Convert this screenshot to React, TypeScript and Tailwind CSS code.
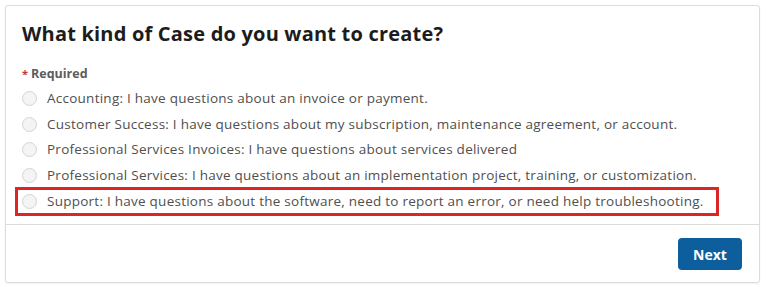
import React, { useState } from 'react'

// ─── Case type options ─────────────────────────────────────────────────────

const CASE_TYPES = [
  'Accounting: I have questions about an invoice or payment.',
  'Customer Success: I have questions about my subscription, maintenance agreement, or account.',
  'Professional Services Invoices: I have questions about services delivered',
  'Professional Services: I have questions about an implementation project, training, or customization.',
  'Support: I have questions about the software, need to report an error, or need help troubleshooting.',
]

const FONT = { fontFamily: '"Open Sans", "Liberation Sans", sans-serif' }

/**
 * Single radio row. Highlighted rows get the red callout box.
 */
function RadioRow({
  label,
  checked,
  onSelect,
}: {
  label: string
  checked: boolean
  onSelect: () => void
}) {
  return (
    <label className="flex items-center gap-[10px] h-[25.5px] cursor-pointer">
      <span
        className={`w-[15px] h-[15px] rounded-full border shrink-0 bg-[#f4f4f4]
                    ${checked ? 'border-[#0c5e9c] border-[4px] bg-white' : 'border-[#d4d4d4]'}`}
      />
      <input type="radio" className="hidden" checked={checked} onChange={onSelect} />
      <span className="text-[13.5px] text-[#4f4f4f] whitespace-nowrap tracking-[0.25px]">{label}</span>
    </label>
  )
}

export default function App() {
  const [selected, setSelected] = useState<number | null>(null)

  return (
    <div className="w-[766px] h-[287px] bg-white p-[5px] pr-[6px] pb-[4px]" style={FONT}>
      <div className="h-full flex flex-col border border-[#dcdcdc] rounded-[3px] shadow-[0_1px_2px_rgba(0,0,0,0.06)]">
        {/* ── Body ── */}
        <div className="pl-[16px] pt-[14px] flex-1">
          <h1 className="text-[20px] leading-[28px] font-bold text-[#1c1c1c] tracking-[0.2px]">
            What kind of Case do you want to create?
          </h1>

          <div className="mt-[17px] flex items-center gap-[3px] text-[12.5px] font-bold text-[#5c5c5c]">
            <span className="text-[#c23934] text-[11px]">*</span>
            <span>Required</span>
          </div>

          <div className="mt-[2px] flex flex-col">
            {CASE_TYPES.map((label, i) =>
              i === CASE_TYPES.length - 1 ? (
                <div
                  key={label}
                  className="-ml-[7px] -mt-[1px] w-fit border-[3px] border-[#dc2626] pl-[4px] pr-[12px] h-[29px] flex items-center"
                >
                  <RadioRow label={label} checked={selected === i} onSelect={() => setSelected(i)} />
                </div>
              ) : (
                <RadioRow key={label} label={label} checked={selected === i} onSelect={() => setSelected(i)} />
              )
            )}
          </div>
        </div>

        {/* ── Footer ── */}
        <div className="border-t border-[#dcdcdc] h-[58px] flex items-start justify-end pt-[13px] pr-[17px]">
          <button className="w-[64px] h-[32px] rounded-[4px] bg-[#0c5e9c] text-white text-[14px] font-bold">
            Next
          </button>
        </div>
      </div>
    </div>
  )
}
